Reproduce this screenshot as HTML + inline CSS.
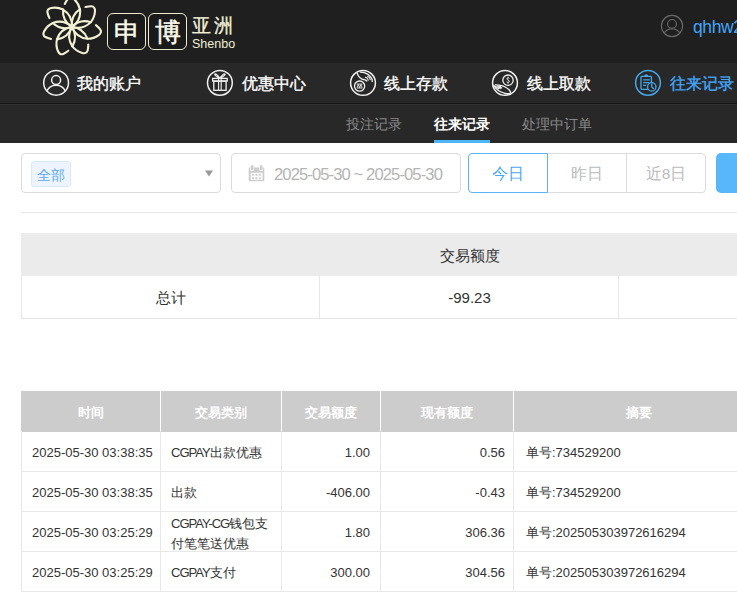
<!DOCTYPE html>
<html><head><meta charset="utf-8">
<style>
*{box-sizing:border-box;margin:0;padding:0}
html,body{width:737px;height:592px;overflow:hidden;background:#fff;font-family:"Liberation Sans",sans-serif;position:relative}
.abs{position:absolute}
#hdr{left:0;top:0;width:737px;height:63px;background:#1f1f1f}
#nav{left:0;top:63px;width:737px;height:40px;background:#282828}
#navline1{left:0;top:103px;width:737px;height:1px;background:#141414}
#navline2{left:0;top:104px;width:737px;height:1px;background:#333}
#sub{left:0;top:105px;width:737px;height:38px;background:#282828}
.box{border:1.6px solid #eeebcd;border-radius:6px;background:#1a1a1a;width:39px;height:37px;top:13px}
.bch{color:#fbfaea;font-size:26px;line-height:37px;text-align:center;width:100%;font-weight:500;-webkit-text-stroke:0.5px #fbfaea}
.ni{font-size:16px;font-weight:500;-webkit-text-stroke:0.35px currentColor;color:#fff;top:74px;line-height:20px;white-space:nowrap}
.sn{font-size:14px;color:#8a8a8a;top:115px;line-height:18px;white-space:nowrap}
.inp{border:1px solid #dcdcdc;border-radius:4px;top:153px;height:40px}
.btn{top:153px;height:40px;border:1px solid #dcdcdc;font-size:15.5px;color:#bbb;text-align:center;line-height:40px}
.sc{font-size:15px;color:#333;text-align:center;line-height:20px}
.th{top:393px;height:40px;line-height:40px;text-align:center;color:#fff;font-weight:bold;font-size:13px}
.ls{letter-spacing:-1px}
.td{font-size:13px;color:#333;line-height:18px;white-space:nowrap}
</style></head><body>
<div id="hdr" class="abs"></div>
<div id="nav" class="abs"></div>
<div id="navline1" class="abs"></div>
<div id="navline2" class="abs"></div>
<div id="sub" class="abs"></div>

<!-- logo -->
<svg class="abs" style="left:0;top:0" width="110" height="63" viewBox="0 0 110 63">
<g transform="translate(71.9,26.9) rotate(-117)"><g transform="rotate(0.000)" fill="none" stroke="#f3f1d3" stroke-width="2.1" stroke-linecap="round"><path d="M0,0 Q9.75,6 19.5,0 C22.5,-2.3 25.3,-6.5 26.3,-9.8 C27.1,-12.6 26.2,-14.6 24,-15.2 C22,-15.7 20,-15.9 18,-16"/><path d="M0,0 Q9.75,-6 19.5,0"/></g><g transform="rotate(51.429)" fill="none" stroke="#f3f1d3" stroke-width="2.1" stroke-linecap="round"><path d="M0,0 Q9.75,6 19.5,0 C22.5,-2.3 25.3,-6.5 26.3,-9.8 C27.1,-12.6 26.2,-14.6 24,-15.2 C22,-15.7 20,-15.9 18,-16"/><path d="M0,0 Q9.75,-6 19.5,0"/></g><g transform="rotate(102.857)" fill="none" stroke="#f3f1d3" stroke-width="2.1" stroke-linecap="round"><path d="M0,0 Q9.75,6 19.5,0 C22.5,-2.3 25.3,-6.5 26.3,-9.8 C27.1,-12.6 26.2,-14.6 24,-15.2 C22,-15.7 20,-15.9 18,-16"/><path d="M0,0 Q9.75,-6 19.5,0"/></g><g transform="rotate(154.286)" fill="none" stroke="#f3f1d3" stroke-width="2.1" stroke-linecap="round"><path d="M0,0 Q9.75,6 19.5,0 C22.5,-2.3 25.3,-6.5 26.3,-9.8 C27.1,-12.6 26.2,-14.6 24,-15.2 C22,-15.7 20,-15.9 18,-16"/><path d="M0,0 Q9.75,-6 19.5,0"/></g><g transform="rotate(205.714)" fill="none" stroke="#f3f1d3" stroke-width="2.1" stroke-linecap="round"><path d="M0,0 Q9.75,6 19.5,0 C22.5,-2.3 25.3,-6.5 26.3,-9.8 C27.1,-12.6 26.2,-14.6 24,-15.2 C22,-15.7 20,-15.9 18,-16"/><path d="M0,0 Q9.75,-6 19.5,0"/></g><g transform="rotate(257.143)" fill="none" stroke="#f3f1d3" stroke-width="2.1" stroke-linecap="round"><path d="M0,0 Q9.75,6 19.5,0 C22.5,-2.3 25.3,-6.5 26.3,-9.8 C27.1,-12.6 26.2,-14.6 24,-15.2 C22,-15.7 20,-15.9 18,-16"/><path d="M0,0 Q9.75,-6 19.5,0"/></g><g transform="rotate(308.571)" fill="none" stroke="#f3f1d3" stroke-width="2.1" stroke-linecap="round"><path d="M0,0 Q9.75,6 19.5,0 C22.5,-2.3 25.3,-6.5 26.3,-9.8 C27.1,-12.6 26.2,-14.6 24,-15.2 C22,-15.7 20,-15.9 18,-16"/><path d="M0,0 Q9.75,-6 19.5,0"/></g></g></svg>
<div class="abs box" style="left:107px"><div class="bch">申</div></div>
<div class="abs box" style="left:148px"><div class="bch">博</div></div>
<div class="abs" style="left:192px;top:15px;font-size:19px;line-height:22px;color:#f0eed6;letter-spacing:2.5px;font-weight:500;-webkit-text-stroke:0.3px #f0eed6">亚洲</div>
<div class="abs" style="left:192px;top:37px;font-size:12.5px;line-height:14px;color:#f0eed6">Shenbo</div>

<!-- user -->
<div class="abs" style="left:693px;top:15px;font-size:17.5px;color:#42a5f5;line-height:24px;letter-spacing:-0.4px;white-space:nowrap">qhhw2</div>


<!-- nav icons -->
<svg class="abs" style="left:42px;top:69px" width="28" height="28" viewBox="0 0 28 28" fill="none" stroke="#f0f0f0" stroke-width="1.5"><circle cx="14.1" cy="13.8" r="12.4"/><circle cx="14.1" cy="11.1" r="4.5"/><path d="M4.7,22.4 A10.2,10.2 0 0 1 23.5,22.4"/></svg>
<svg class="abs" style="left:206px;top:69px" width="28" height="28" viewBox="0 0 28 28" fill="none" stroke="#f0f0f0" stroke-width="1.3"><circle cx="13.9" cy="13.85" r="12.4" stroke-width="1.5"/><rect x="6.7" y="9.4" width="14.5" height="2.7"/><rect x="7.8" y="12.1" width="12.3" height="9.2"/><path d="M12.6,9.4 V21.3 M15.2,9.4 V21.3" stroke-width="1.1"/><path d="M13.9,9.4 C11.5,8.2 8.6,6.6 8.7,5.3 C9,4 11.8,5.6 13.9,9.4 M13.9,9.4 C16.3,8.2 19.2,6.6 19.1,5.3 C18.8,4 16,5.6 13.9,9.4" stroke-width="1.2"/></svg>
<svg class="abs" style="left:349px;top:69px" width="28" height="28" viewBox="0 0 28 28" fill="none" stroke="#f0f0f0" stroke-width="1.3"><circle cx="14" cy="13.9" r="12.4" stroke-width="1.5"/><path d="M8,3.4 C8.6,6 10,8.6 12.6,9.8 C14.2,10.5 15.5,10.6 16.2,10.9 C17,11.4 17.7,11.9 18.2,12.4"/><path d="M10.8,3.1 C12.6,3.2 14.4,3.3 16,3.9 C17.8,4.6 19.2,5.4 20.3,6.5 C21.6,7.7 22.6,9 23,10.2 C23.3,11.2 23.3,12.2 23.1,13"/><path d="M16,8.6 C17.2,8 18.6,8.8 19.4,11.6 M18.2,7.7 C19.4,7.3 20.6,8.3 21.4,11.2" stroke-width="1.1"/><circle cx="10.6" cy="17.1" r="5.1"/><path d="M7.8,15.1 H13.5 M7.8,19 H13.5 M8.1,18.6 L9.3,15.5 L10.6,18.6 L11.9,15.5 L13.1,18.6" stroke-width="0.9"/></svg>
<svg class="abs" style="left:491px;top:69px" width="28" height="28" viewBox="0 0 28 28" fill="none" stroke="#f0f0f0" stroke-width="1.3"><circle cx="14" cy="13.9" r="12.4" stroke-width="1.5"/><circle cx="17" cy="11.2" r="5.2"/><path d="M18.4,9.4 C18.1,8.6 15.8,8.6 15.8,9.9 C15.8,11.1 18.4,10.9 18.4,12.3 C18.4,13.7 15.9,13.6 15.6,12.8 M17,7.7 V8.7 M17,13.6 V14.6" stroke-width="1"/><path d="M2.5,15.9 C4,18.5 5.5,20.2 7,21.2 C9,22.6 11.5,23.6 14,24.3 C15.8,24.8 17.4,24.9 19.3,24.4"/><path d="M4,15.9 C6,15.8 8,16 9.6,16.4 C11.4,16.8 13,17.3 14.2,18 C15.8,18.9 17,19.7 17.8,20.5 C18.7,21.5 19.4,22.6 19.8,24"/><path d="M4.3,17.2 L8,20 M6.2,16.6 L9.6,19.8 M8.3,16.8 L11,19.4"/></svg>
<svg class="abs" style="left:634px;top:69px" width="28" height="28" viewBox="0 0 28 28" fill="none" stroke="#46a8ec" stroke-width="1.3"><circle cx="14" cy="13.85" r="12.4" stroke-width="1.5"/><rect x="7" y="7.4" width="10.4" height="12.9" rx="0.8"/><path d="M10.9,7.3 A1.3,1.3 0 0 1 13.5,7.3"/><path d="M9.2,10.8 H15.7 M9.2,13.55 H15.2 M9.2,16.35 H12.2"/><circle cx="17.75" cy="17.9" r="4.2" fill="#282828"/><path d="M17.75,14.5 V17.9 L19.9,20"/></svg>
<!-- user icon -->
<svg class="abs" style="left:660px;top:14px" width="24" height="24" viewBox="0 0 24 24" fill="none" stroke="#6b6b6b" stroke-width="1.1"><circle cx="12" cy="12" r="10.6"/><circle cx="12" cy="9.9" r="4.4"/><path d="M4.5,18.6 A9.2,9.2 0 0 1 19.5,18.6"/></svg>
<!-- nav items -->
<div class="abs ni" style="left:77px">我的账户</div>
<div class="abs ni" style="left:242px">优惠中心</div>
<div class="abs ni" style="left:384px">线上存款</div>
<div class="abs ni" style="left:527px">线上取款</div>
<div class="abs ni" style="left:670px;color:#42a5f5">往来记录</div>

<!-- sub nav -->
<div class="abs sn" style="left:346px">投注记录</div>
<div class="abs sn" style="left:434px;color:#fff;font-weight:bold">往来记录</div>
<div class="abs sn" style="left:522px">处理中订单</div>
<div class="abs" style="left:434px;top:140px;width:56px;height:3px;background:#4db5f5"></div>

<div class="abs inp" style="left:21px;width:200px"></div>
<div class="abs inp" style="left:231px;width:230px"></div>

<!-- filters -->
<div class="abs" style="left:31px;top:161px;width:40px;height:26px;background:#eef4fe;border:1px solid #d9e8fc;border-radius:3px;color:#5aaaf0;font-size:14px;line-height:26px;text-align:center">全部</div>
<svg class="abs" style="left:204px;top:170px" width="10" height="7" viewBox="0 0 10 7"><path d="M1 0.5 L9 0.5 L5 6.5 Z" fill="#999"/></svg>
<svg class="abs" style="left:248px;top:165px" width="17" height="17" viewBox="0 0 17 17"><rect x="0.7" y="2.5" width="15.6" height="13.8" rx="1.3" fill="#cdcdcd"/><rect x="2.7" y="7.75" width="11.8" height="7.1" fill="#fff"/><g fill="#cdcdcd"><rect x="4.1" y="8.8" width="2" height="2"/><rect x="7.4" y="8.8" width="2" height="2"/><rect x="10.8" y="8.8" width="2" height="2"/><rect x="4.1" y="12.2" width="2" height="2"/><rect x="7.4" y="12.2" width="2" height="2"/><rect x="10.8" y="12.2" width="2" height="2"/></g><rect x="2.2" y="-0.5" width="3.8" height="6.5" rx="1" fill="#fff"/><rect x="11.3" y="-0.5" width="3.8" height="6.5" rx="1" fill="#fff"/><rect x="2.8" y="0.2" width="2.7" height="5" rx="0.9" fill="#cdcdcd"/><rect x="11.8" y="0.2" width="2.7" height="5" rx="0.9" fill="#cdcdcd"/></svg>
<div class="abs" style="left:274px;top:164px;font-size:16.6px;line-height:21px;color:#b4b4b4;letter-spacing:-0.9px;white-space:nowrap">2025-05-30 ~ 2025-05-30</div>
<div class="abs btn" style="left:468px;width:80px;border-color:#5ab4f5;color:#4aa8f0;border-radius:4px 0 0 4px;z-index:2">今日</div>
<div class="abs btn" style="left:547px;width:80px;border-left:none">昨日</div>
<div class="abs btn" style="left:626px;width:80px;border-radius:0 4px 4px 0">近8日</div>
<div class="abs" style="left:716px;top:153px;width:60px;height:40px;background:#57b7fa;border-radius:5px"></div>
<div class="abs" style="left:21px;top:212px;width:716px;height:1px;background:#e6e6e6"></div>

<!-- summary -->
<div class="abs" style="left:21px;top:233px;width:716px;height:43px;background:#ebebeb"></div>
<div class="abs" style="left:21px;top:276px;width:716px;height:43px;border-left:1px solid #e6e6e6;border-bottom:1px solid #e6e6e6"></div>
<div class="abs" style="left:319px;top:276px;width:1px;height:42px;background:#e6e6e6"></div>
<div class="abs" style="left:618px;top:276px;width:1px;height:42px;background:#e6e6e6"></div>
<div class="abs sc" style="left:320px;top:246px;width:299px">交易额度</div>
<div class="abs sc" style="left:21px;top:288px;width:299px">总计</div>
<div class="abs sc" style="left:320px;top:288px;width:299px">-99.23</div>

<!-- detail -->
<div class="abs" style="left:21px;top:391px;width:716px;height:41px;background:#cccccc"></div>
<div class="abs th" style="left:21px;width:139px">时间</div>
<div class="abs th" style="left:160px;width:121px">交易类别</div>
<div class="abs th" style="left:281px;width:99px">交易额度</div>
<div class="abs th" style="left:380px;width:133px">现有额度</div>
<div class="abs th" style="left:513px;width:252px">摘要</div>
<div class="abs" style="left:160px;top:391px;width:1px;height:40px;background:#fff"></div>
<div class="abs" style="left:160px;top:431px;width:1px;height:161px;background:#e8e8e8"></div>
<div class="abs" style="left:281px;top:391px;width:1px;height:40px;background:#fff"></div>
<div class="abs" style="left:281px;top:431px;width:1px;height:161px;background:#e8e8e8"></div>
<div class="abs" style="left:380px;top:391px;width:1px;height:40px;background:#fff"></div>
<div class="abs" style="left:380px;top:431px;width:1px;height:161px;background:#e8e8e8"></div>
<div class="abs" style="left:513px;top:391px;width:1px;height:40px;background:#fff"></div>
<div class="abs" style="left:513px;top:431px;width:1px;height:161px;background:#e8e8e8"></div>
<div class="abs" style="left:21px;top:431px;width:1px;height:161px;background:#e8e8e8"></div>
<div class="abs" style="left:21px;top:471px;width:716px;height:1px;background:#e8e8e8"></div>
<div class="abs" style="left:21px;top:511px;width:716px;height:1px;background:#e8e8e8"></div>
<div class="abs" style="left:21px;top:551px;width:716px;height:1px;background:#e8e8e8"></div>
<div class="abs" style="left:21px;top:591px;width:716px;height:1px;background:#e8e8e8"></div>
<div class="abs td" style="left:171px;top:444px"><span class="ls">CGPAY</span>出款优惠</div>
<div class="abs td" style="left:32px;top:444px">2025-05-30 03:38:35</div>
<div class="abs td" style="right:367px;top:444px;text-align:right">1.00</div>
<div class="abs td" style="right:232px;top:444px;text-align:right">0.56</div>
<div class="abs td" style="left:526px;top:444px">单号:734529200</div>
<div class="abs td" style="left:171px;top:484px">出款</div>
<div class="abs td" style="left:32px;top:484px">2025-05-30 03:38:35</div>
<div class="abs td" style="right:367px;top:484px;text-align:right">-406.00</div>
<div class="abs td" style="right:232px;top:484px;text-align:right">-0.43</div>
<div class="abs td" style="left:526px;top:484px">单号:734529200</div>
<div class="abs td" style="left:171px;top:514px;line-height:20px"><span class="ls">CGPAY-CG</span>钱包支<br>付笔笔送优惠</div>
<div class="abs td" style="left:32px;top:524px">2025-05-30 03:25:29</div>
<div class="abs td" style="right:367px;top:524px;text-align:right">1.80</div>
<div class="abs td" style="right:232px;top:524px;text-align:right">306.36</div>
<div class="abs td" style="left:526px;top:524px">单号:202505303972616294</div>
<div class="abs td" style="left:171px;top:564px"><span class="ls">CGPAY</span>支付</div>
<div class="abs td" style="left:32px;top:564px">2025-05-30 03:25:29</div>
<div class="abs td" style="right:367px;top:564px;text-align:right">300.00</div>
<div class="abs td" style="right:232px;top:564px;text-align:right">304.56</div>
<div class="abs td" style="left:526px;top:564px">单号:202505303972616294</div>

</body></html>
